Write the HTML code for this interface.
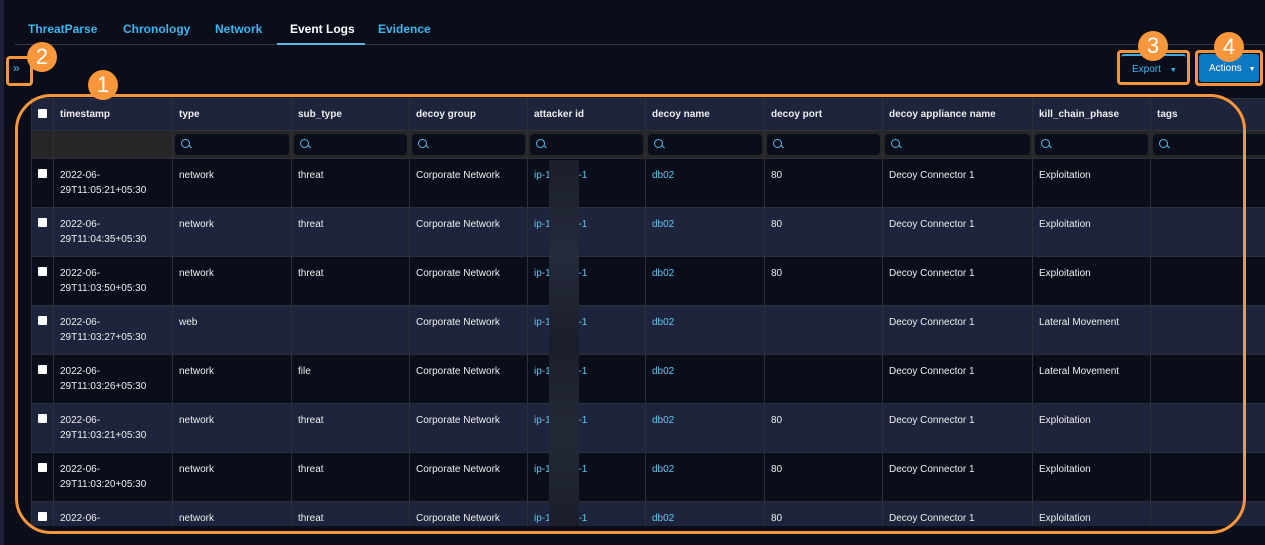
<!DOCTYPE html>
<html><head><meta charset="utf-8"><style>
*{box-sizing:border-box;margin:0;padding:0}
html,body{width:1265px;height:545px;overflow:hidden}
body{background:#0a0e1a;font-family:"Liberation Sans",sans-serif;position:relative;color:#e8e8e8}
.strip{position:absolute;left:0;top:0;width:4px;height:545px;background:#1c2134}
.tab{position:absolute;top:22px;font-size:12px;font-weight:bold;color:#3fb6ee}
.tabline{position:absolute;left:15px;right:0;top:44px;height:1px;background:#333845}
.act{position:absolute;left:277px;width:88px;top:43px;height:2px;background:#5bb8e8}
table{position:absolute;left:31px;top:98px;border-collapse:collapse;table-layout:fixed;width:1240px}
td,th{border:1px solid #2e3038;font-size:10px;text-align:left;vertical-align:top;padding:0 6px;overflow:hidden;white-space:nowrap}
th{background:#1e243b;height:32px;vertical-align:middle;font-weight:bold;color:#eee}
tr.f td{background:#262626;height:27px;padding:3px 2px}
.sb{background:#0a0e1a;border-radius:4px;height:21px;position:relative}
.sb:after{content:"";position:absolute;left:6px;top:5px;width:7px;height:7px;border:1.3px solid #5ab8e8;border-radius:50%}
.sb:before{content:"";position:absolute;left:13px;top:12px;width:4px;height:1.4px;background:#5ab8e8;transform:rotate(45deg)}
tr.r td{height:49px;padding-top:9px;line-height:15px;color:#eee}
tr.r:nth-child(odd) td{background:#1e243b}
tr.r:nth-child(even) td{background:#0a0e1a}
tr.r td.b{color:#62c6f0}
.cb{display:inline-block;width:9px;height:9px;background:#fff;border-radius:1px}
.ob{position:absolute;border:3px solid #f7963a}
.badge{position:absolute;width:30px;height:30px;border-radius:50%;background:#f7963a;color:#fff;font-size:22px;text-align:center;line-height:30px}
.blur{position:absolute;left:549px;top:160px;width:30px;height:366px;background:linear-gradient(#1a1e2c,#262b3b,#1a1e2c,#242938,#1a1e2c)}
</style></head><body>
<div class="tab" style="left:28px">ThreatParse</div>
<div class="tab" style="left:123px">Chronology</div>
<div class="tab" style="left:215px">Network</div>
<div class="tab" style="left:290px;color:#fff">Event Logs</div>
<div class="tab" style="left:378px">Evidence</div>
<div class="tabline"></div><div class="act"></div>
<div style="position:absolute;left:13px;top:61px;color:#5ab8e8;font-size:12px">»</div>
<div style="position:absolute;left:1121px;top:54px;width:65px;height:27px;border-top:2px solid #3fa9e0;border-radius:3px;color:#3fb6ee;font-size:10px;padding:8px 0 0 11px">Export <span style="font-size:7px;margin-left:6px">▼</span></div>
<div style="position:absolute;left:1199px;top:54px;width:60px;height:28px;background:#0b78c2;border-radius:3px;color:#fff;font-size:10px;padding:9px 0 0 10px">Actions <span style="font-size:7px;margin-left:4px">▼</span></div>
<table>
<colgroup><col style="width:22px"><col style="width:119px"><col style="width:119px"><col style="width:118px"><col style="width:118px"><col style="width:118px"><col style="width:119px"><col style="width:118px"><col style="width:150px"><col style="width:118px"><col style="width:121px"></colgroup>
<tr><th><span class="cb"></span></th><th>timestamp</th><th>type</th><th>sub_type</th><th>decoy group</th><th>attacker id</th><th>decoy name</th><th>decoy port</th><th>decoy appliance name</th><th>kill_chain_phase</th><th>tags</th></tr>
<tr class="f"><td></td><td></td><td><div class="sb"></div></td><td><div class="sb"></div></td><td><div class="sb"></div></td><td><div class="sb"></div></td><td><div class="sb"></div></td><td><div class="sb"></div></td><td><div class="sb"></div></td><td><div class="sb"></div></td><td><div class="sb"></div></td></tr>
<tr class="r" style="display:none"></tr>
<tr class="r"><td><span class="cb"></span></td><td>2022-06-<br>29T11:05:21+05:30</td><td>network</td><td>threat</td><td>Corporate Network</td><td class="b">ip-1&nbsp;&nbsp;&nbsp;&nbsp;&nbsp;&nbsp;&nbsp;&nbsp;&nbsp;&nbsp;-1</td><td class="b">db02</td><td>80</td><td>Decoy Connector 1</td><td>Exploitation</td><td></td></tr>
<tr class="r"><td><span class="cb"></span></td><td>2022-06-<br>29T11:04:35+05:30</td><td>network</td><td>threat</td><td>Corporate Network</td><td class="b">ip-1&nbsp;&nbsp;&nbsp;&nbsp;&nbsp;&nbsp;&nbsp;&nbsp;&nbsp;&nbsp;-1</td><td class="b">db02</td><td>80</td><td>Decoy Connector 1</td><td>Exploitation</td><td></td></tr>
<tr class="r"><td><span class="cb"></span></td><td>2022-06-<br>29T11:03:50+05:30</td><td>network</td><td>threat</td><td>Corporate Network</td><td class="b">ip-1&nbsp;&nbsp;&nbsp;&nbsp;&nbsp;&nbsp;&nbsp;&nbsp;&nbsp;&nbsp;-1</td><td class="b">db02</td><td>80</td><td>Decoy Connector 1</td><td>Exploitation</td><td></td></tr>
<tr class="r"><td><span class="cb"></span></td><td>2022-06-<br>29T11:03:27+05:30</td><td>web</td><td></td><td>Corporate Network</td><td class="b">ip-1&nbsp;&nbsp;&nbsp;&nbsp;&nbsp;&nbsp;&nbsp;&nbsp;&nbsp;&nbsp;-1</td><td class="b">db02</td><td></td><td>Decoy Connector 1</td><td>Lateral Movement</td><td></td></tr>
<tr class="r"><td><span class="cb"></span></td><td>2022-06-<br>29T11:03:26+05:30</td><td>network</td><td>file</td><td>Corporate Network</td><td class="b">ip-1&nbsp;&nbsp;&nbsp;&nbsp;&nbsp;&nbsp;&nbsp;&nbsp;&nbsp;&nbsp;-1</td><td class="b">db02</td><td></td><td>Decoy Connector 1</td><td>Lateral Movement</td><td></td></tr>
<tr class="r"><td><span class="cb"></span></td><td>2022-06-<br>29T11:03:21+05:30</td><td>network</td><td>threat</td><td>Corporate Network</td><td class="b">ip-1&nbsp;&nbsp;&nbsp;&nbsp;&nbsp;&nbsp;&nbsp;&nbsp;&nbsp;&nbsp;-1</td><td class="b">db02</td><td>80</td><td>Decoy Connector 1</td><td>Exploitation</td><td></td></tr>
<tr class="r"><td><span class="cb"></span></td><td>2022-06-<br>29T11:03:20+05:30</td><td>network</td><td>threat</td><td>Corporate Network</td><td class="b">ip-1&nbsp;&nbsp;&nbsp;&nbsp;&nbsp;&nbsp;&nbsp;&nbsp;&nbsp;&nbsp;-1</td><td class="b">db02</td><td>80</td><td>Decoy Connector 1</td><td>Exploitation</td><td></td></tr>
<tr class="r"><td><span class="cb"></span></td><td>2022-06-</td><td>network</td><td>threat</td><td>Corporate Network</td><td class="b">ip-1&nbsp;&nbsp;&nbsp;&nbsp;&nbsp;&nbsp;&nbsp;&nbsp;&nbsp;&nbsp;-1</td><td class="b">db02</td><td>80</td><td>Decoy Connector 1</td><td>Exploitation</td><td></td></tr>
</table>
<div style="position:absolute;left:0;top:526px;width:1265px;height:40px;background:#0a0e1a"></div>
<div class="strip"></div>
<div class="blur"></div>
<div class="ob" style="left:15px;top:94px;width:1231px;height:440px;border-radius:36px"></div>
<div class="ob" style="left:6px;top:56px;width:27px;height:30px;border-radius:4px"></div>
<div class="ob" style="left:1117px;top:50px;width:73px;height:35px;border-radius:4px"></div>
<div class="ob" style="left:1195px;top:50px;width:68px;height:36px;border-radius:4px"></div>
<div class="badge" style="left:88px;top:70px">1</div>
<div class="badge" style="left:27px;top:42px">2</div>
<div class="badge" style="left:1138px;top:31px">3</div>
<div class="badge" style="left:1214px;top:32px">4</div>
</body></html>
